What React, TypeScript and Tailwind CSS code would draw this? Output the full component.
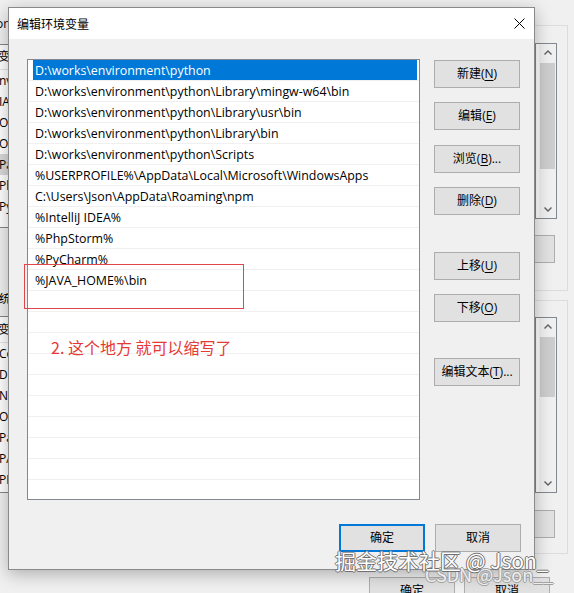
const pathRows = [
  "D:\\works\\environment\\python",
  "D:\\works\\environment\\python\\Library\\mingw-w64\\bin",
  "D:\\works\\environment\\python\\Library\\usr\\bin",
  "D:\\works\\environment\\python\\Library\\bin",
  "D:\\works\\environment\\python\\Scripts",
  "%USERPROFILE%\\AppData\\Local\\Microsoft\\WindowsApps",
  "C:\\Users\\Json\\AppData\\Roaming\\npm",
  "%IntelliJ IDEA%",
  "%PhpStorm%",
  "%PyCharm%",
  "%JAVA_HOME%\\bin",
];

const userVars = ["nvm", "IAM", "OneDrive", "OneDriveConsumer", "Path", "PhpStorm", "PyCharm"];
const sysVars = ["ComSpec", "DriverData", "NUMBER_OF_PROCESSORS", "OS", "Path", "PATHEXT", "PROCESSOR_ARCHITECTURE"];

type BtnProps = {
  text: string;
  mn?: string;
  tail?: string;
  className?: string;
  focused?: boolean;
};

const WinButton = ({ text, mn, tail = "", className = "", focused }: BtnProps) => (
  <div
    className={`w-[86px] h-[28px] flex items-center justify-center bg-[#e1e1e1] ${
      focused ? "border-2 border-[#0078d7]" : "border border-[#adadad]"
    } ${className}`}
  >
    <span>
      {text}
      {mn && (
        <>
          (<span className="underline underline-offset-2">{mn}</span>)
        </>
      )}
      {tail}
    </span>
  </div>
);

const Chevron = ({ up }: { up?: boolean }) => (
  <svg width="8" height="5" viewBox="0 0 8 5">
    <path
      d={up ? "M0.5 4.5 L4 1 L7.5 4.5" : "M0.5 0.5 L4 4 L7.5 0.5"}
      fill="none"
      stroke="#606060"
      strokeWidth="1.4"
    />
  </svg>
);

const ScrollBar = ({ top, thumbH }: { top: number; thumbH: string }) => (
  <div
    className="absolute left-[535px] w-[22px] h-[176px] border border-[#828790] bg-white flex justify-end"
    style={{ top }}
  >
    <div className="w-[17px] h-full bg-[#f0f0f0] flex flex-col items-center">
      <div className="h-[17px] flex items-center justify-center">
        <Chevron up />
      </div>
      <div className={`w-[15px] mt-[2px] bg-[#cdcdcd] ${thumbH}`} />
      <div className="flex-1" />
      <div className="h-[17px] flex items-center justify-center">
        <Chevron />
      </div>
    </div>
  </div>
);

export default function App() {
  return (
    <div className="relative w-[574px] h-[593px] overflow-hidden bg-[#f0f0f0] font-['Open_Sans','Noto_Sans_CJK_SC',sans-serif] text-[12px] leading-none text-black">
      {/* window behind */}
      <div className="absolute left-0 top-[18px] w-[8px] overflow-hidden whitespace-nowrap">
        <span className="ml-[-8px]">for</span>
      </div>

      <div className="absolute left-0 top-[44px] w-[8px] h-[184px] bg-white border-y border-[#828790] overflow-hidden whitespace-nowrap">
        <div className="h-[25px] flex items-center pl-0 border-b border-[#e5e5e5]">
          <span className="ml-[-2px]">变量</span>
        </div>
        {userVars.map((v, i) => (
          <div
            key={v}
            className={`h-[21px] flex items-center pl-0 ${i === 4 ? "bg-[#d9d9d9]" : ""}`}
          >
            <span className="ml-[-1px]">{v}</span>
          </div>
        ))}
      </div>

      <div className="absolute left-0 top-[293px] w-[8px] overflow-hidden whitespace-nowrap">
        <span className="ml-[-13px]">系统变量(S)</span>
      </div>

      <div className="absolute left-0 top-[316px] w-[8px] h-[177px] bg-white border-y border-[#828790] overflow-hidden whitespace-nowrap">
        <div className="h-[26px] flex items-center border-b border-[#e5e5e5]">
          <span className="ml-[-2px]">变量</span>
        </div>
        {sysVars.map((v) => (
          <div key={v} className="h-[21px] flex items-center">
            <span className="ml-[-1px]">{v}</span>
          </div>
        ))}
      </div>

      <div className="absolute left-[480px] top-[25px] w-[88px] h-[266px] border border-[#dcdcdc]" />
      <div className="absolute left-[480px] top-[300px] w-[88px] h-[254px] border border-[#dcdcdc]" />

      <ScrollBar top={43} thumbH="h-[106px]" />
      <div className="absolute left-[500px] top-[235px] w-[55px] h-[28px] bg-[#e1e1e1] border border-[#adadad]" />
      <ScrollBar top={317} thumbH="h-[60px]" />
      <div className="absolute left-[500px] top-[510px] w-[55px] h-[28px] bg-[#e1e1e1] border border-[#adadad]" />

      <div className="absolute left-[369px] top-[577px] w-[86px] h-[28px] bg-[#e1e1e1] border border-[#adadad] flex items-center justify-center">
        确定
      </div>
      <div className="absolute left-[464px] top-[577px] w-[86px] h-[28px] bg-[#e1e1e1] border border-[#adadad] flex items-center justify-center">
        取消
      </div>

      {/* dialog */}
      <div className="absolute left-[8px] top-[7px] w-[527px] h-[563px] border border-[#8a8a8a] bg-[#f0f0f0] shadow-[0_4px_16px_rgba(0,0,0,0.28)] flex flex-col">
        <div className="h-[31px] shrink-0 bg-white flex items-center justify-between pl-[8px] pr-[9px]">
          <span className="font-['Noto_Sans_CJK_SC',sans-serif]">编辑环境变量</span>
          <svg width="11" height="11" viewBox="0 0 11 11">
            <path d="M0.5 0.5 L10.5 10.5 M10.5 0.5 L0.5 10.5" stroke="#000" strokeWidth="1" />
          </svg>
        </div>

        <div className="flex-1 flex flex-col pl-[18px] pr-[13px] pt-[20px]">
          <div className="flex">
            <div className="w-[393px] h-[441px] border border-[#828790] bg-white overflow-hidden text-[12.4px]">
              {Array.from({ length: 21 }).map((_, i) => (
                <div key={i} className="h-[21px] border-b border-[#f0f0f0] flex pl-[5px] pr-[2px]">
                  <div
                    className={`flex-1 flex items-center pl-[2px] pt-[2px] whitespace-nowrap ${
                      i === 0 ? "bg-[#0078d7] text-white" : ""
                    }`}
                  >
                    {pathRows[i] ?? ""}
                  </div>
                </div>
              ))}
            </div>

            <div className="ml-[14px] mt-[1px] flex flex-col">
              <WinButton text="新建" mn="N" />
              <WinButton text="编辑" mn="E" className="mt-[14px]" />
              <WinButton text="浏览" mn="B" tail="..." className="mt-[15px]" />
              <WinButton text="删除" mn="D" className="mt-[14px]" />
              <WinButton text="上移" mn="U" className="mt-[37px]" />
              <WinButton text="下移" mn="O" className="mt-[14px]" />
              <WinButton text="编辑文本" mn="T" tail="..." className="mt-[36px]" />
            </div>
          </div>

          <div className="flex justify-end gap-[10px] mt-[24px]">
            <WinButton text="确定" focused />
            <WinButton text="取消" />
          </div>
        </div>
      </div>

      {/* annotation */}
      <div className="absolute left-[24px] top-[264px] w-[220px] h-[45px] border border-[#e0474c]" />
      <span className="absolute left-[51px] top-[337px] text-[16px] leading-[20px] text-[#e53935] font-['Noto_Sans_CJK_SC',sans-serif]">
        2. 这个地方 就可以缩写了
      </span>

      {/* watermarks */}
      <span className="absolute left-[425px] top-[563px] text-[18px] leading-[22px] text-[#eeeeee] font-['Noto_Sans_CJK_SC',sans-serif] [text-shadow:1px_0_#a0a0a0,-1px_0_#a0a0a0,0_1px_#a0a0a0,0_-1px_#a0a0a0]">
        CSDN @Json__
      </span>
      <span className="absolute left-[335px] top-[547px] text-[21px] leading-[26px] text-white font-['Noto_Sans_CJK_SC',sans-serif] [text-shadow:1px_0_#707070,-1px_0_#707070,0_1px_#707070,0_-1px_#707070]">
        掘金技术社区 @ Json_
      </span>
    </div>
  );
}
